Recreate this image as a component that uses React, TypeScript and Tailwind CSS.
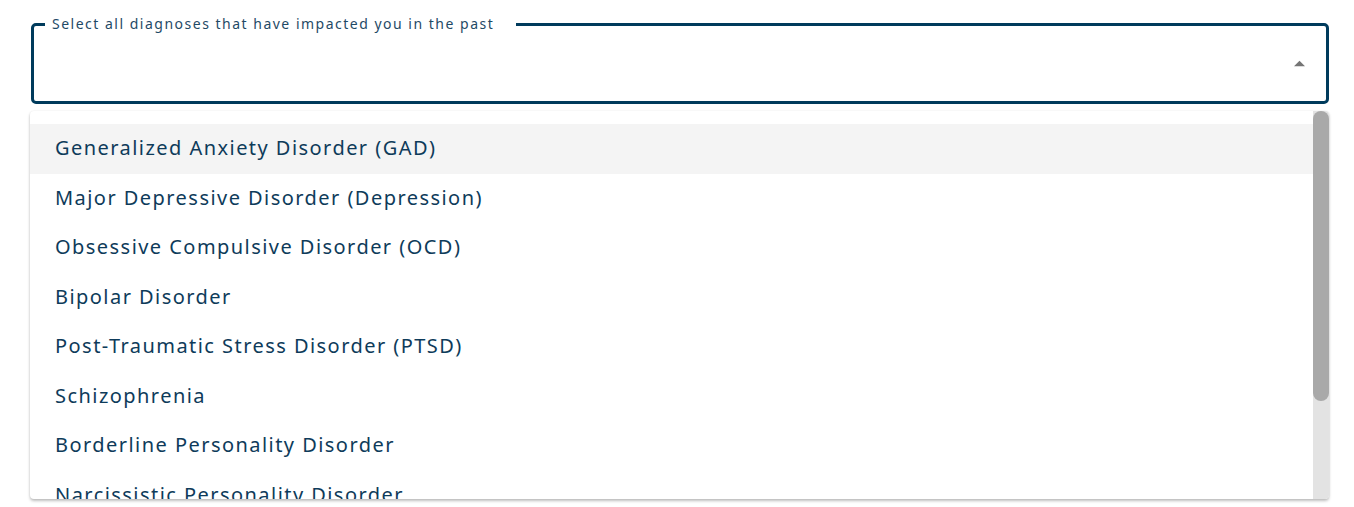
import React from 'react';

const diagnoses = [
  'Generalized Anxiety Disorder (GAD)',
  'Major Depressive Disorder (Depression)',
  'Obsessive Compulsive Disorder (OCD)',
  'Bipolar Disorder',
  'Post-Traumatic Stress Disorder (PTSD)',
  'Schizophrenia',
  'Borderline Personality Disorder',
  'Narcissistic Personality Disorder',
];

export default function App() {
  return (
    <div
      className="relative h-[507px] w-full overflow-hidden bg-white"
      style={{ fontFamily: '"Noto Sans", "Open Sans", sans-serif' }}
    >
      {/* Select field */}
      <div className="ml-[31px] mr-[25px] pt-[14px]">
        <fieldset className="h-[90px] rounded-[5px] border-[3px] border-[#003b5c] pl-[11px] pr-[21px]">
          <legend className="pl-[7px] pr-[22px] text-[14px] leading-[20px] tracking-[1.5px] text-[#1f4a66]">
            Select all diagnoses that have impacted you in the past
          </legend>
          <div className="flex h-[65px] items-center justify-end">
            <svg width="11" height="7" viewBox="0 0 10 5" className="mt-[-6px]">
              <path d="M0 5 L5 0 L10 5 Z" fill="#757575" />
            </svg>
          </div>
        </fieldset>
      </div>

      {/* Dropdown menu */}
      <div className="absolute left-[30px] top-[111px] h-[388px] w-[1299px] overflow-hidden rounded-[4px] bg-white shadow-[0_2px_3px_rgba(0,0,0,0.25),0_0_2px_rgba(0,0,0,0.08)]">
        <ul className="pt-[13px] pr-[16px]">
          {diagnoses.map((d, i) => (
            <li
              key={d}
              className={`flex h-[49.5px] items-center pb-[1px] pl-[25px] text-[20px] tracking-[1.45px] text-[#0e3b5a] ${i === 0 ? 'bg-[#f4f4f4]' : ''}`}
            >
              {d}
            </li>
          ))}
        </ul>
        {/* Scrollbar */}
        <div className="absolute right-0 top-0 flex h-full w-[16px] flex-col bg-[#e3e3e3]">
          <div className="h-[290px] rounded-[8px] bg-[#a9a9a9]" />
        </div>
      </div>
    </div>
  );
}
